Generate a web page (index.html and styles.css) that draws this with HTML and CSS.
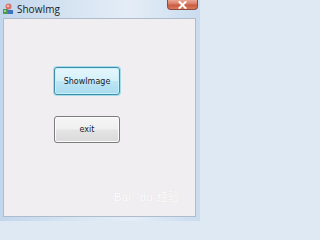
FILE: index.html
```html
<!DOCTYPE html>
<html>
<head>
<meta charset="utf-8">
<link rel="stylesheet" href="styles.css">
</head>
<body>
<div class="window">
  <div class="titlebar">
    <svg class="app-icon" width="12" height="12" viewBox="0 0 12 12">
      <circle cx="6.5" cy="3.5" r="3" fill="#d9706a"/>
      <circle cx="6" cy="3" r="1.3" fill="#f4c0b0"/>
      <rect x="1" y="6" width="5" height="5" fill="#4f9a4a"/>
      <rect x="6" y="7" width="5" height="4" fill="#3f74c4"/>
      <rect x="2" y="7" width="2" height="2" fill="#9fd18f"/>
    </svg>
    <span class="title">ShowImg</span>
    <div class="spacer"></div>
    <div class="close-btn">
      <svg width="9" height="8" viewBox="0 0 9 8">
        <path d="M1.5 1 L7.5 7 M7.5 1 L1.5 7" stroke="#ffffff" stroke-width="2" stroke-linecap="square"/>
      </svg>
    </div>
  </div>
  <div class="client">
    <button class="btn btn-default">ShowImage</button>
    <button class="btn">exit</button>
    <div class="watermark">Bai<span class="paw">&#x2234;</span>du 经验</div>
  </div>
</div>
</body>
</html>
```

FILE: styles.css
```css
html, body {
  margin: 0;
  padding: 0;
  width: 200px;
  height: 221px;
  overflow: hidden;
  background: #dfe9f4;
}

.window {
  width: 200px;
  height: 221px;
  box-sizing: border-box;
  display: flex;
  flex-direction: column;
  background: linear-gradient(90deg, #c2d6ec 0%, #d6e4f2 35%, #e4edf7 65%, #cadcef 100%);
  padding: 0 4px 4px 3px;
}

.titlebar {
  height: 18px;
  display: flex;
  align-items: flex-start;
  flex: none;
}

.app-icon {
  margin: 3px 0 0 -1px;
  flex: none;
}

.title {
  font-family: "Open Sans", "DejaVu Sans", sans-serif;
  font-size: 10px;
  line-height: 12px;
  color: #1a1a1a;
  margin: 3px 0 0 3px;
}

.spacer {
  flex: 1;
}

.close-btn {
  width: 31px;
  height: 10px;
  margin-right: -2px;
  box-sizing: border-box;
  border: 1px solid #8a4a40;
  border-top: none;
  border-radius: 0 0 4px 4px;
  background: linear-gradient(180deg, #eaa896 0%, #d87a62 45%, #c85a40 55%, #dc7a5a 100%);
  display: flex;
  align-items: center;
  justify-content: center;
}

.client {
  position: relative;
  flex: 1;
  background: #f0eef0;
  border: 1px solid #aebccb;
  display: flex;
  flex-direction: column;
  align-items: flex-start;
  padding: 48px 0 0 50px;
  gap: 21px;
}

.btn {
  width: 66px;
  height: 27px;
  margin: 0;
  padding: 0;
  font-family: "DejaVu Sans", sans-serif;
  font-size: 8px;
  color: #1c1c1c;
  border: 1px solid #7c7c7c;
  border-radius: 3px;
  background: linear-gradient(180deg, #f6f6f6 0%, #efefef 48%, #e4e4e4 52%, #dadada 100%);
  box-shadow: inset 0 0 0 1px #fcfcfc;
}

.btn-default {
  height: 28px;
  border-color: #3e8ea8;
  background: linear-gradient(180deg, #e6f6fc 0%, #d4f0fa 48%, #bde6f5 52%, #a9dcef 100%);
  box-shadow: 0 0 0 1px #a6dbe9, inset 0 0 0 1px #c8f0fb;
}

.watermark {
  position: absolute;
  left: 110px;
  top: 167px;
  font-family: "Liberation Sans", "Noto Sans CJK SC", sans-serif;
  font-size: 11px;
  color: #fdfdfd;
  text-shadow: 0 0 1px #dcdcdc;
  letter-spacing: 0.5px;
}

.paw {
  font-size: 8px;
  vertical-align: 6px;
}
```
